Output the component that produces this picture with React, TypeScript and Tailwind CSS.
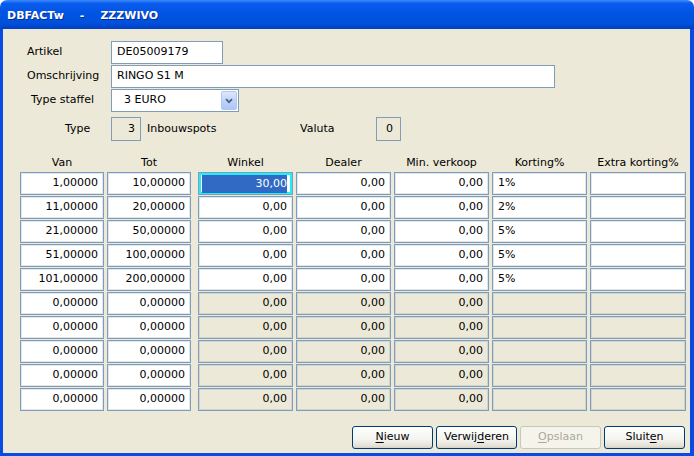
import React from "react";

type Col = { key: string; header: string; cls: string; align: "right" | "left" };

const cols: Col[] = [
  { key: "van", header: "Van", cls: "w-[84px]", align: "right" },
  { key: "tot", header: "Tot", cls: "w-[84px] mr-[4px]", align: "right" },
  { key: "winkel", header: "Winkel", cls: "w-[95px]", align: "right" },
  { key: "dealer", header: "Dealer", cls: "w-[95px]", align: "right" },
  { key: "min", header: "Min. verkoop", cls: "w-[95px]", align: "right" },
  { key: "korting", header: "Korting%", cls: "w-[95px]", align: "left" },
  { key: "extra", header: "Extra korting%", cls: "w-[96px]", align: "left" },
];

const van = ["1,00000", "11,00000", "21,00000", "51,00000", "101,00000"];
const tot = ["10,00000", "20,00000", "50,00000", "100,00000", "200,00000"];
const korting = ["1%", "2%", "5%", "5%", "5%"];

const rows = Array.from({ length: 10 }, (_, i) => ({
  van: van[i] ?? "0,00000",
  tot: tot[i] ?? "0,00000",
  winkel: i === 0 ? "30,00" : "0,00",
  dealer: "0,00",
  min: "0,00",
  korting: korting[i] ?? "",
  extra: "",
}));

function Cell({ col, value, row }: { col: Col; value: string; row: number }) {
  const disabled = row >= 5 && col.key !== "van" && col.key !== "tot";
  const focused = row === 0 && col.key === "winkel";

  if (focused) {
    return (
      <div className={`${col.cls} h-[23px] border border-[#7F9DB9] bg-white p-[2px] shadow-[inset_0_0_0_2px_#1FF0F7]`}>
        <div className="ml-[1px] mr-[3px] flex h-[18px] items-center justify-end bg-[#316AC5] text-white">
          {value}
        </div>
      </div>
    );
  }

  return (
    <div
      className={`${col.cls} flex h-[23px] items-center border border-[#7F9DB9] shadow-[inset_0_0_0_1px_rgba(127,157,185,0.25)] ${
        disabled ? "bg-[#ECE9D8]" : "bg-white"
      } ${col.align === "right" ? "justify-end pr-[5px]" : "justify-start pl-[5px]"}`}
    >
      {value}
    </div>
  );
}

function XpButton({ children, disabled }: { children: React.ReactNode; disabled?: boolean }) {
  return (
    <div
      className={`flex h-[23px] w-[81px] items-center justify-center rounded-[3px] border ${
        disabled
          ? "border-[#C9C7BA] bg-[#F5F4EA] text-[#ACA899]"
          : "border-[#003C74] bg-[linear-gradient(#FFFFFF,#F3F3EF_60%,#E3E0D6_90%,#D6D0C5)] text-black"
      }`}
    >
      {children}
    </div>
  );
}

export default function App() {
  return (
    <div className="flex h-[456px] w-[694px] flex-col overflow-hidden bg-white font-['DejaVu_Sans',sans-serif] text-[11px] text-black">
      {/* title bar */}
      <div className="flex h-[29px] shrink-0 items-center gap-[16px] rounded-t-[7px] bg-[linear-gradient(#3A8CFB,#0A5CEE_12%,#0054E3_45%,#0050DC_80%,#003FC0)] pl-[7px] pt-[3px] text-[11px] font-bold text-white [text-shadow:1px_1px_0_#0A2D90]">
        <span>DBFACTw</span>
        <span>-</span>
        <span>ZZZWIVO</span>
      </div>

      {/* body */}
      <div className="flex flex-1 flex-col border-b-[3px] border-l-[3px] border-r-[4px] border-[#0A4CE2] bg-[#ECE9D8]">
        <div className="ml-[24px] mt-[12px] flex flex-col gap-[1px]">
          <div className="flex h-[23px] items-center">
            <div className="w-[84px]">Artikel</div>
            <div className="flex h-[23px] w-[112px] items-center border border-[#7F9DB9] bg-white pl-[5px]">
              DE05009179
            </div>
          </div>
          <div className="flex h-[23px] items-center">
            <div className="w-[84px]">Omschrijving</div>
            <div className="flex h-[23px] w-[444px] items-center border border-[#7F9DB9] bg-white pl-[5px]">
              RINGO S1 M
            </div>
          </div>
          <div className="flex h-[23px] items-center">
            <div className="w-[84px] pl-[4px]">Type staffel</div>
            <div className="flex h-[23px] w-[128px] items-center justify-between border border-[#7F9DB9] bg-white pl-[12px] pr-[1px]">
              <span>3 EURO</span>
              <div className="flex h-[19px] w-[16px] items-center justify-center rounded-[2px] border border-[#B1C6F3] bg-[linear-gradient(#DDE8FE,#C0D3FB_50%,#AFC6F6)]">
                <svg width="8" height="6" viewBox="0 0 8 6">
                  <path d="M1 1.2 L4 4.2 L7 1.2" fill="none" stroke="#4D6185" strokeWidth="1.8" />
                </svg>
              </div>
            </div>
          </div>
        </div>

        {/* Type / Valuta */}
        <div className="ml-[24px] mt-[5px] flex h-[24px] items-center">
          <div className="w-[84px] pl-[38px]">Type</div>
          <div className="flex h-[24px] w-[30px] items-center justify-end border border-[#7F9DB9] pr-[5px]">3</div>
          <div className="w-[159px] pl-[6px]">Inbouwspots</div>
          <div className="w-[76px]">Valuta</div>
          <div className="flex h-[24px] w-[25px] items-center justify-end border border-[#7F9DB9] pr-[7px]">0</div>
        </div>

        {/* table */}
        <div className="ml-[17px] mt-[14px] flex flex-col gap-[1px]">
          <div className="flex h-[16px] items-center gap-[3px]">
            {cols.map((c) => (
              <div key={c.key} className={`${c.cls} text-center`}>
                {c.header}
              </div>
            ))}
          </div>
          {rows.map((r, i) => (
            <div key={i} className="flex gap-[3px]">
              {cols.map((c) => (
                <Cell key={c.key} col={c} row={i} value={(r as Record<string, string>)[c.key]} />
              ))}
            </div>
          ))}
        </div>

        {/* buttons */}
        <div className="mt-[15px] flex justify-end gap-[3px] pr-[5px]">
          <XpButton>
            <span className="underline underline-offset-2">N</span>ieuw
          </XpButton>
          <XpButton>
            Verwij<span className="underline underline-offset-2">d</span>eren
          </XpButton>
          <XpButton disabled>
            <span className="underline underline-offset-2">O</span>pslaan
          </XpButton>
          <XpButton>
            Sluit<span className="underline underline-offset-2">e</span>n
          </XpButton>
        </div>
      </div>
    </div>
  );
}
